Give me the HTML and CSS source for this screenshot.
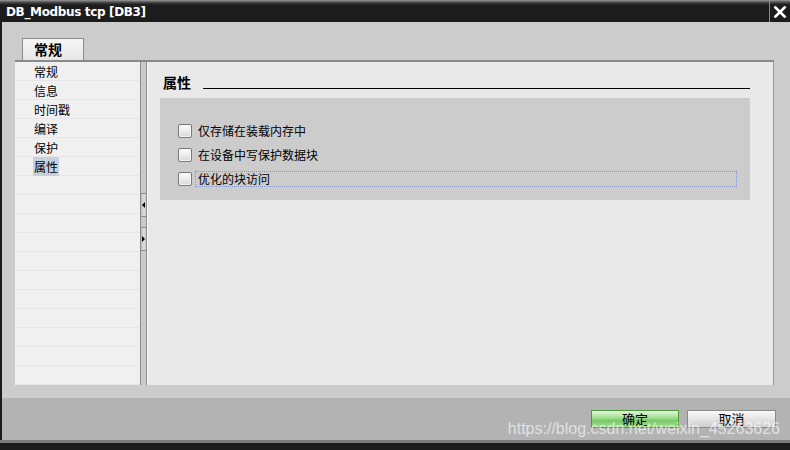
FILE: index.html
```html
<!DOCTYPE html>
<html>
<head>
<meta charset="utf-8">
<link rel="stylesheet" href="styles.css">
</head>
<body>
<div class="window">
  <div class="titlebar">
    <span class="title">DB_Modbus tcp [DB3]</span>
    <div class="close">
      <svg width="14" height="12" viewBox="0 0 14 12"><path d="M1.5 0.5 L12.5 11.5 M12.5 0.5 L1.5 11.5" stroke="#fff" stroke-width="2.6" fill="none"/></svg>
    </div>
  </div>
  <div class="body">
    <div class="tabs"><div class="tab">常规</div></div>
    <div class="panel">
      <div class="nav">
        <div class="nav-item"><span>常规</span></div>
        <div class="nav-item"><span>信息</span></div>
        <div class="nav-item"><span>时间戳</span></div>
        <div class="nav-item"><span>编译</span></div>
        <div class="nav-item"><span>保护</span></div>
        <div class="nav-item"><span class="sel">属性</span></div>
        <div class="nav-item"></div>
        <div class="nav-item"></div>
        <div class="nav-item"></div>
        <div class="nav-item"></div>
        <div class="nav-item"></div>
        <div class="nav-item"></div>
        <div class="nav-item"></div>
        <div class="nav-item"></div>
        <div class="nav-item"></div>
        <div class="nav-item"></div>
        <div class="nav-item"></div>
      </div>
      <div class="splitter">
        <div class="split-btn"><svg width="4" height="6" viewBox="0 0 4 6"><path d="M3 0 L0 3 L3 6 Z" fill="#000"/></svg></div>
        <div class="split-btn"><svg width="4" height="6" viewBox="0 0 4 6"><path d="M0 0 L3 3 L0 6 Z" fill="#000"/></svg></div>
      </div>
      <div class="content">
        <div class="heading">
          <span class="heading-text">属性</span>
          <div class="heading-line"></div>
        </div>
        <div class="box">
          <div class="row"><span class="cb"></span><span class="label">仅存储在装载内存中</span></div>
          <div class="row"><span class="cb"></span><span class="label">在设备中写保护数据块</span></div>
          <div class="row"><span class="cb"></span><span class="label focus">优化的块访问</span></div>
        </div>
      </div>
    </div>
  </div>
  <div class="footer">
    <button class="btn ok">确定</button>
    <button class="btn">取消</button>
  </div>
  <div class="bottom"></div>
  <div class="watermark">https://blog.csdn.net/weixin_45263626</div>
</div>
</body>
</html>
```

FILE: styles.css
```css
* { box-sizing: border-box; }
html, body { margin: 0; padding: 0; }
body {
  width: 790px;
  height: 450px;
  overflow: hidden;
  font-family: "Noto Sans CJK SC", "DejaVu Sans", sans-serif;
  font-size: 12px;
  color: #000;
}
.window {
  position: relative;
  width: 790px;
  height: 450px;
  display: flex;
  flex-direction: column;
  background: #cccccc;
  border-left: 2px solid #1c1c1c;
}
.titlebar {
  height: 22px;
  flex: none;
  display: flex;
  align-items: center;
  justify-content: space-between;
  background: linear-gradient(#9a9a9a 0, #555 2px, #262626 4px, #1c1c1c 6px);
  margin-left: -2px;
}
.title {
  color: #fff;
  font-family: "DejaVu Sans", sans-serif;
  font-weight: bold;
  font-size: 12px;
  padding-left: 6px;
  padding-top: 2px;
  letter-spacing: -0.35px;
}
.close {
  width: 21px;
  height: 22px;
  border-left: 1px solid #8a8a8a;
  display: flex;
  align-items: center;
  justify-content: center;
  padding-top: 1px;
}
.body {
  flex: 1;
  display: flex;
  flex-direction: column;
  padding: 16px 16px 13px 13px;
}
.tabs {
  height: 22px;
  display: flex;
  padding-left: 7px;
}
.tab {
  width: 62px;
  height: 22px;
  border: 1px solid #8a8a8a;
  border-bottom: none;
  background: linear-gradient(#f6f6f6, #e6e6e6);
  font-weight: bold;
  font-size: 14px;
  line-height: 20px;
  padding-left: 11px;
}
.panel {
  flex: 1;
  display: flex;
  border-top: 2px solid #8a8a8a;
  border-right: 1px solid #9a9a9a;
  background: #e9e9e9;
}
.nav {
  width: 125px;
  background: #f0f0f0;
  padding-left: 1px;
  overflow: hidden;
}
.nav-item {
  height: 19px;
  border-bottom: 1px solid #e6e6e6;
  padding-left: 17px;
  line-height: 19px;
}
.nav-item span { display: inline-block; padding: 0 1px; }
.nav-item .sel { background: #c5d2de; }
.splitter {
  width: 7px;
  border-left: 1px solid #8c8c8c;
  border-right: 1px solid #8c8c8c;
  background: #cacaca;
  display: flex;
  flex-direction: column;
  padding-top: 131px;
  gap: 10px;
}
.split-btn {
  height: 24px;
  width: 5px;
  border-top: 1px solid #8c8c8c;
  border-bottom: 1px solid #8c8c8c;
  background: linear-gradient(90deg, #bdbdbd, #e0e0e0 60%, #c8c8c8);
  display: flex;
  align-items: center;
  padding-left: 1px;
}
.split-btn svg { display: block; }
.content {
  flex: 1;
  padding: 0 23px 0 12px;
  border-left: 1px solid #fafafa;
}
.heading {
  height: 36px;
  display: flex;
  padding-top: 10px;
  padding-left: 3px;
}
.heading-text {
  font-weight: bold;
  font-size: 14px;
  line-height: 20px;
}
.heading-line {
  flex: 1;
  height: 1px;
  background: #000;
  margin-top: 16px;
  margin-left: 12px;
}
.box {
  background: #cccccc;
  padding: 20px 13px 10px 18px;
}
.row {
  height: 24px;
  display: flex;
  align-items: center;
  padding-top: 2px;
}
.cb {
  width: 14px;
  height: 14px;
  flex: none;
  border: 1px solid #7a7a7a;
  border-radius: 2px;
  background: linear-gradient(#ffffff, #d8d8d8);
  box-shadow: inset 0 0 0 1px #f4f4f4;
}
.label {
  margin-left: 3px;
  padding-left: 2px;
  line-height: 14px;
  height: 16px;
  border: 1px dotted transparent;
}
.label.focus {
  flex: 1;
  border-color: #8898c8;
}
.footer {
  height: 42px;
  flex: none;
  background: #b3b3b3;
  display: flex;
  justify-content: flex-end;
  align-items: flex-start;
  gap: 8px;
  padding: 12px 14px 0 0;
}
.btn {
  height: 18px;
  width: 89px;
  margin: 0;
  padding: 0;
  font-family: "Noto Sans CJK SC", sans-serif;
  font-size: 13px;
  line-height: 16px;
  color: #000;
  border: 1px solid #8a8a8a;
  background: linear-gradient(#fafafa, #e0e0e0 60%, #cfcfcf);
}
.btn.ok {
  width: 88px;
  border-color: #4a9a3a;
  background: linear-gradient(#e6f8e0, #9ade8a 45%, #7ac86a 60%, #a2dc90);
}
.bottom {
  height: 10px;
  flex: none;
  border-top: 3px solid #7c7c7c;
  background: #1c1c1c;
  margin-left: -2px;
}
.watermark {
  position: absolute;
  right: 10px;
  top: 420px;
  font-family: "Liberation Sans", sans-serif;
  font-size: 16px;
  color: rgba(255, 255, 255, 0.62);
  white-space: nowrap;
}
```
